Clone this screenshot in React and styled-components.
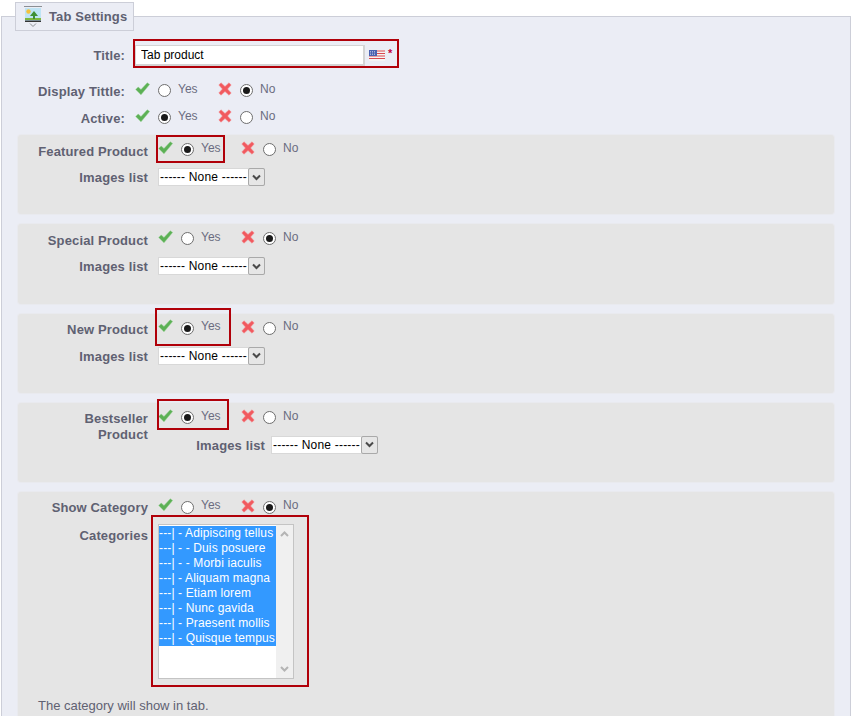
import React from "react";
import styled, { createGlobalStyle } from "styled-components";

const GlobalStyle = createGlobalStyle`
  html, body {
    margin: 0;
    padding: 0;
    height: 716px;
    overflow: hidden;
    background: #fff;
    font-family: "Liberation Sans", Arial, sans-serif;
  }
`;

const Page = styled.div`
  padding: 2px 2px 0 1px;
  height: 714px;
  overflow: hidden;
`;

const Fieldset = styled.fieldset`
  margin: 0;
  min-width: 0;
  padding: 0 16px 40px 16px;
  background: #ebedf5;
  border: 1px solid #ccced8;
  border-bottom: 0;
  position: relative;
`;

const Legend = styled.legend`
  margin-left: -3px;
  padding: 0 5px 0 8px;
  height: 29px;
  width: 119px;
  box-sizing: border-box;
  display: flex;
  align-items: center;
  gap: 7px;
  background: #ebedf5;
  border: 1px solid #ccced8;
  color: #5f6172;
  font-size: 13px;
  letter-spacing: 0.1px;
  font-weight: bold;
  white-space: nowrap;
`;

const Row = styled.div`
  display: flex;
  align-items: ${(p) => (p.$top ? "flex-start" : "center")};
  height: ${(p) => p.$h || 27}px;
  margin-top: ${(p) => p.$mt || 0}px;
`;

const Label = styled.label`
  width: ${(p) => p.$w || 130}px;
  margin-right: ${(p) => p.$gap || 10}px;
  margin-top: ${(p) => p.$mt || 0}px;
  flex: none;
  text-align: right;
  color: #5f6172;
  font-size: 13px;
  letter-spacing: 0.13px;
  line-height: 16px;
  font-weight: bold;
`;

const TitleInput = styled.input`
  width: 230px;
  height: 21px;
  box-sizing: border-box;
  margin: 0 4px 0 0;
  padding: 0 5px;
  border: 1px solid #d4d4d4;
  border-width: 1px 2px 2px 1px;
  outline: 0;
  background: #fff;
  color: #000;
  font: 12px "Liberation Sans", Arial, sans-serif;
`;

const Star = styled.sup`
  color: #c0003a;
  font-size: 11px;
  font-weight: bold;
  line-height: 0;
  margin: -5px 0 0 3px;
`;

const Switch = styled.div`
  display: flex;
  align-items: center;
  position: relative;
  height: 18px;
`;

const Option = styled.span`
  display: inline-flex;
  align-items: center;
  width: ${(p) => p.$w}px;
  flex: none;
`;

const OptText = styled.span`
  color: #6a6c80;
  font-size: 12px;
  position: relative;
  top: -2px;
  margin-left: 7px;
`;

const Radio = styled.span`
  width: 13px;
  height: 13px;
  margin-left: 8px;
  flex: none;
  box-sizing: border-box;
  border: 1px solid #6e6e6e;
  border-radius: 50%;
  background: #fff;
  display: flex;
  align-items: center;
  justify-content: center;
  &::after {
    content: "";
    width: 7px;
    height: 7px;
    border-radius: 50%;
    background: ${(p) => (p.$on ? "#1a1a1a" : "transparent")};
  }
`;

// red annotation boxes drawn on top of the screenshot
const Marker = styled.div`
  position: absolute;
  left: ${(p) => p.$l}px;
  top: ${(p) => p.$t}px;
  width: ${(p) => p.$w}px;
  height: ${(p) => p.$h}px;
  border: 2px solid #b00009;
  box-sizing: border-box;
  pointer-events: none;
`;

const TitleWrap = styled.div`
  display: flex;
  align-items: center;
  position: relative;
`;

const TopRows = styled.div`
  margin-bottom: 4px;
`;

const Panel = styled.section`
  background: #e5e5e5;
  border-radius: 3px;
  height: ${(p) => p.$h || 79.25}px;
  margin-bottom: 10px;
  padding-top: 1px;
  box-sizing: border-box;
  box-shadow: 0 0 0 1px #e9eaef;
`;

const SelectBox = styled.div`
  width: 107px;
  height: 18px;
  margin-bottom: 2px;
  box-sizing: border-box;
  display: flex;
  align-items: center;
  background: #fff;
  border: 1px solid #d8d8d8;
  font-size: 12px;
  letter-spacing: 0.2px;
  color: #000;
`;

const SelectText = styled.span`
  flex: 1;
  text-align: center;
  white-space: nowrap;
  overflow: hidden;
`;

const SelectArrow = styled.span`
  width: 17px;
  height: 18px;
  margin-right: -1px;
  box-sizing: border-box;
  flex: none;
  background: #e6e6e6;
  border: 1px solid #a9a9a9;
  border-radius: 2px;
  display: flex;
  align-items: center;
  justify-content: center;
`;

const ListBox = styled.div`
  width: 136px;
  height: 155px;
  box-sizing: border-box;
  display: flex;
  background: #fff;
  border: 1px solid #c4c4c4;
  padding: 1px 0 0 0;
`;

const ListItems = styled.div`
  width: 117px;
  flex: none;
`;

const ListItem = styled.div`
  height: 15px;
  line-height: 15px;
  background: #3399ff;
  color: #fff;
  font-size: 12px;
  letter-spacing: 0.13px;
  white-space: pre;
  overflow: hidden;
`;

const ScrollTrack = styled.div`
  flex: 1;
  margin-top: -1px;
  background: #f0f0f0;
  display: flex;
  flex-direction: column;
  justify-content: space-between;
  align-items: center;
  padding: 6px 0 6px;
`;

const Hint = styled.p`
  margin: 0;
  padding-left: 20px;
  color: #5f6172;
  font-size: 13px;
  line-height: 15px;
`;

const Relative = styled.div`
  position: relative;
  display: flex;
`;

const Glyph = styled.svg`
  flex: none;
  margin-bottom: ${(p) => p.$lift || 0}px;
`;

const CheckIcon = () => (
  <Glyph $lift={4} width="15" height="14" viewBox="0 0 15 14">
    <path d="M0.7 7.5 L3.2 5 L6 7.6 L12.3 0.8 L14.6 2.4 L6 12.8 Z" fill="#5cb055" stroke="#8fce8b" strokeWidth="0.5" strokeLinejoin="round" />
  </Glyph>
);

const CrossIcon = () => (
  <Glyph $lift={3} width="14" height="14" viewBox="0 0 14 14">
    <path d="M0.8 3 L3 0.8 L7 4.4 L11 0.8 L13.2 3 L9.6 7 L13.2 11 L11 13.2 L7 9.6 L3 13.2 L0.8 11 L4.4 7 Z" fill="#f15a5f" stroke="#f58f92" strokeWidth="0.5" strokeLinejoin="round" />
  </Glyph>
);

const FlagIcon = () => (
  <svg width="16" height="11" viewBox="0 0 16 11">
    <rect width="16" height="11" fill="#f4f4f4" />
    <path d="M0 1h16M0 3.5h16M0 6h16M0 8.5h16" stroke="#d9494f" strokeWidth="1.2" />
    <rect width="8" height="6" fill="#4a62b0" />
    <path d="M1 1.5h6M1 3h6M1 4.5h6" stroke="#cfd6ee" strokeWidth="0.7" strokeDasharray="1 1" />
  </svg>
);

const SlideIcon = () => (
  <svg width="18" height="22" viewBox="0 0 18 22">
    <rect x="0" y="0" width="18" height="1" fill="#8b8f94" />
    <rect x="1" y="2" width="16" height="14" fill="#bfe4f5" />
    <circle cx="4.5" cy="5.5" r="2.2" fill="#f5c23c" />
    <rect x="1" y="12" width="16" height="2" fill="#7fb83e" />
    <path d="M10 5 L14 10 H11 V13 H9 V10 H6 Z" fill="#3f8f35" />
    <rect x="1" y="14.5" width="16" height="1.5" fill="#333" />
    <path d="M6 17.5 L9 20.5 L12 17.5" fill="none" stroke="#8b8f94" />
  </svg>
);

const Caret = () => (
  <svg width="9" height="7" viewBox="0 0 9 7">
    <path d="M1 1.5 L4.5 5 L8 1.5" fill="none" stroke="#4a4a4a" strokeWidth="2" />
  </svg>
);

const ScrollArrow = ({ up }) => (
  <svg width="9" height="6" viewBox="0 0 9 6">
    <path d={up ? "M1 5 L4.5 1.5 L8 5" : "M1 1 L4.5 4.5 L8 1"} fill="none" stroke="#b4b4b4" strokeWidth="2" />
  </svg>
);

const YesNo = ({ yes, marker }) => (
  <Switch>
    <CheckIcon />
    <Option $w={68}>
      <Radio $on={yes} />
      <OptText>Yes</OptText>
    </Option>
    <CrossIcon />
    <Option $w={50}>
      <Radio $on={!yes} />
      <OptText>No</OptText>
    </Option>
    {marker && <Marker {...marker} />}
  </Switch>
);

const Select = () => (
  <SelectBox>
    <SelectText>------ None ------</SelectText>
    <SelectArrow>
      <Caret />
    </SelectArrow>
  </SelectBox>
);

const categories = [
  "---| - Adipiscing tellus",
  "---| - - Duis posuere",
  "---| - - Morbi iaculis",
  "---| - Aliquam magna",
  "---| - Etiam lorem",
  "---| - Nunc gavida",
  "---| - Praesent mollis",
  "---| - Quisque tempus",
];

const productPanels = [
  { label: "Featured Product", marker: { $l: -2, $t: -6, $w: 69, $h: 28 } },
  { label: "Special Product", yes: false },
  { label: "New Product", marker: { $l: -3, $t: -11, $w: 76, $h: 38 } },
];

export default function App() {
  return (
    <Page>
      <GlobalStyle />
      <Fieldset>
        <Legend>
          <SlideIcon />
          Tab Settings
        </Legend>
        <TopRows>
          <Row $h={28} $mt={10}>
            <Label $w={107} $mt={2}>Title:</Label>
            <TitleWrap>
              <TitleInput readOnly value="Tab product" />
              <FlagIcon />
              <Star>*</Star>
              <Marker $l={-2} $t={-6} $w={266} $h={29} />
            </TitleWrap>
          </Row>
          <Row $mt={8}>
            <Label $w={107} $mt={2}>Display Tittle:</Label>
            <YesNo yes={false} />
          </Row>
          <Row>
            <Label $w={107} $mt={2}>Active:</Label>
            <YesNo yes={true} />
          </Row>
        </TopRows>
        {productPanels.map((p) => (
          <Panel key={p.label}>
            <Row>
              <Label $mt={4}>{p.label}</Label>
              <YesNo yes={p.yes !== false} marker={p.marker} />
            </Row>
            <Row $h={30}>
              <Label>Images list</Label>
              <Select />
            </Row>
          </Panel>
        ))}
        <Panel>
          <Row $h={22} $mt={5} $top>
            <Label $mt={2}>
              Bestseller
              <br />
              Product
            </Label>
            <YesNo yes={true} marker={{ $l: -1, $t: -10, $w: 72, $h: 31 }} />
          </Row>
          <Row $h={30}>
            <Label $w={247} $gap={6}>Images list</Label>
            <Select />
          </Row>
        </Panel>
        <Panel $h={240}>
          <Row $mt={1} $h={26}>
            <Label $mt={2}>Show Category</Label>
            <YesNo yes={false} />
          </Row>
          <Row $h={174} $mt={4} $top>
            <Label $mt={4}>Categories</Label>
            <Relative>
              <ListBox>
                <ListItems>
                  {categories.map((c) => (
                    <ListItem key={c}>{c}</ListItem>
                  ))}
                </ListItems>
                <ScrollTrack>
                  <ScrollArrow up />
                  <ScrollArrow />
                </ScrollTrack>
              </ListBox>
              <Marker $l={-7} $t={-9} $w={158} $h={172} />
            </Relative>
          </Row>
          <Hint>The category will show in tab.</Hint>
        </Panel>
      </Fieldset>
    </Page>
  );
}
